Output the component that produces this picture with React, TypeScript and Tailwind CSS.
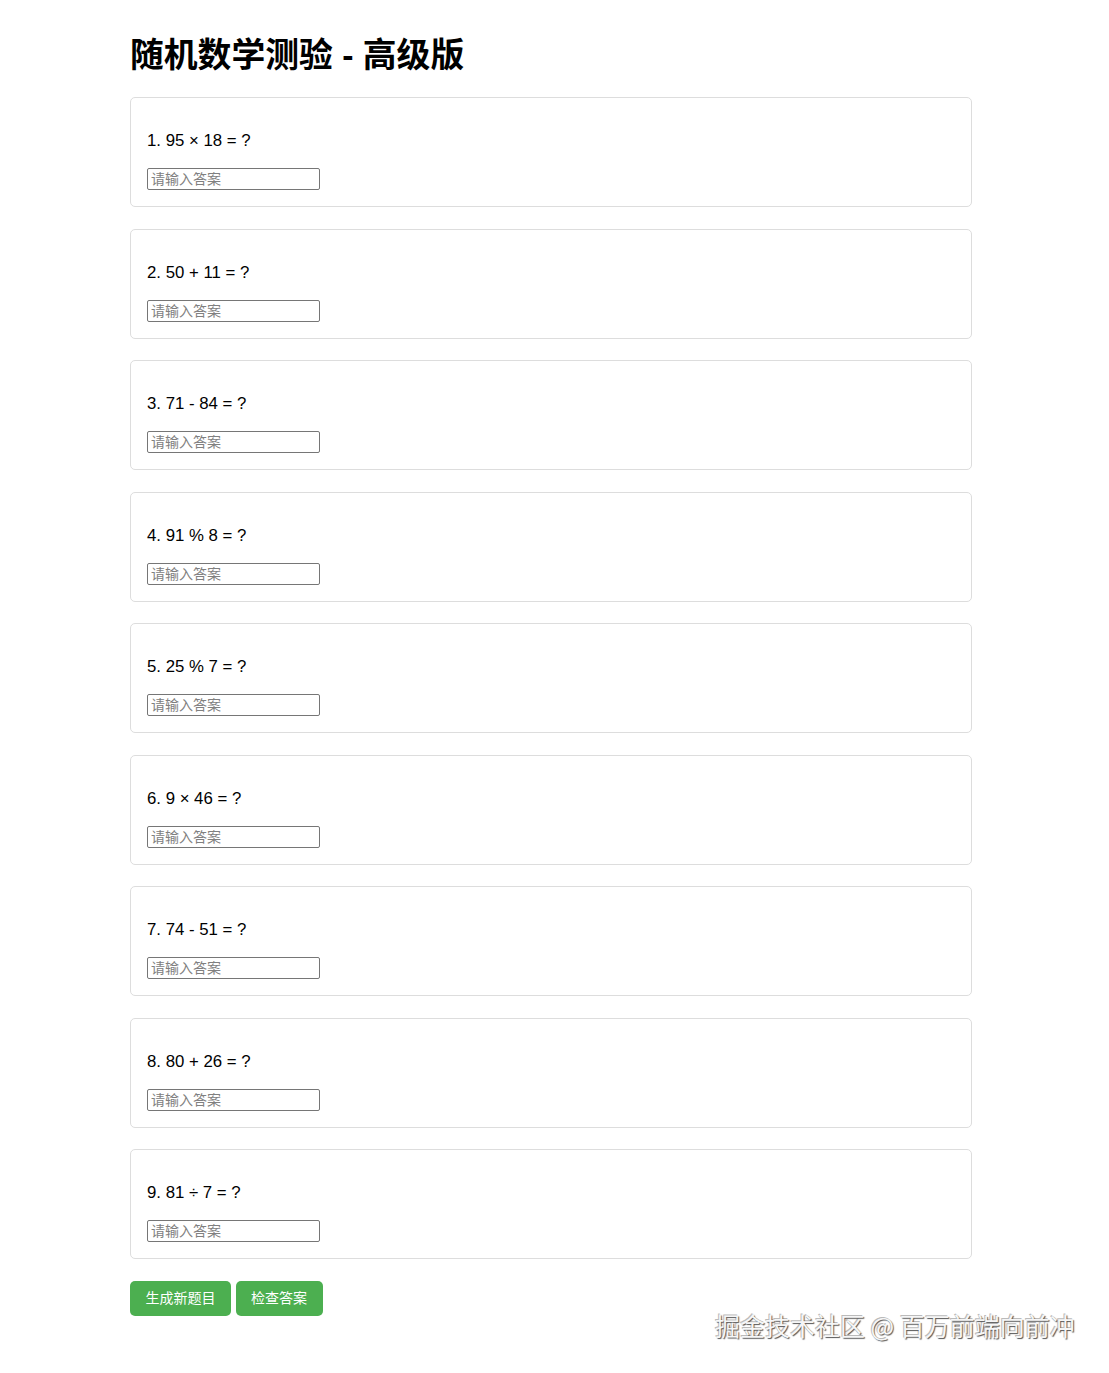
import React from "react";

const questions = [
  "1. 95 × 18 = ?",
  "2. 50 + 11 = ?",
  "3. 71 - 84 = ?",
  "4. 91 % 8 = ?",
  "5. 25 % 7 = ?",
  "6. 9 × 46 = ?",
  "7. 74 - 51 = ?",
  "8. 80 + 26 = ?",
  "9. 81 ÷ 7 = ?",
];

export default function App() {
  return (
    <div className="relative min-h-[1373px] bg-white font-['Liberation_Sans','Noto_Sans_CJK_SC',sans-serif] text-black">
      <div className="ml-[130px] w-[842px] pt-[35px]">
        <h1 className="m-0 text-[33.8px] font-bold leading-[40px] font-['Liberation_Sans','Noto_Sans_CJK_SC',sans-serif]">
          随机数学测验 - 高级版
        </h1>
        <div className="mt-[22px] flex flex-col gap-[21.5px]">
          {questions.map((q) => (
            <div
              key={q}
              className="rounded-[5px] border border-[#dddddd] px-4 pt-[33px] pb-4"
            >
              <p className="m-0 text-[16.8px] leading-[19px]">{q}</p>
              <input
                type="text"
                placeholder="请输入答案"
                className="mt-[18px] block h-[22px] w-[173px] rounded-[2px] border border-[#767676] px-[3px] text-[14px] font-['Liberation_Sans','Noto_Sans_CJK_SC',sans-serif] placeholder:text-[#808080] outline-none"
              />
            </div>
          ))}
        </div>
        <div className="mt-[21.5px] flex gap-[4.5px]">
          <button className="h-[35px] rounded-[5px] bg-[#4caf50] px-[15.5px] text-[14px] text-white">
            生成新题目
          </button>
          <button className="h-[35px] rounded-[5px] bg-[#4caf50] px-[15.5px] text-[14px] text-white">
            检查答案
          </button>
        </div>
      </div>
      <div className="absolute left-[715px] top-[1308px] text-[25px] leading-[34px] text-[#f6f6f6] [text-shadow:1px_1px_1px_#555,-1px_-1px_0_#bbb] font-['Noto_Sans_CJK_SC',sans-serif]">
        掘金技术社区 @ 百万前端向前冲
      </div>
    </div>
  );
}
